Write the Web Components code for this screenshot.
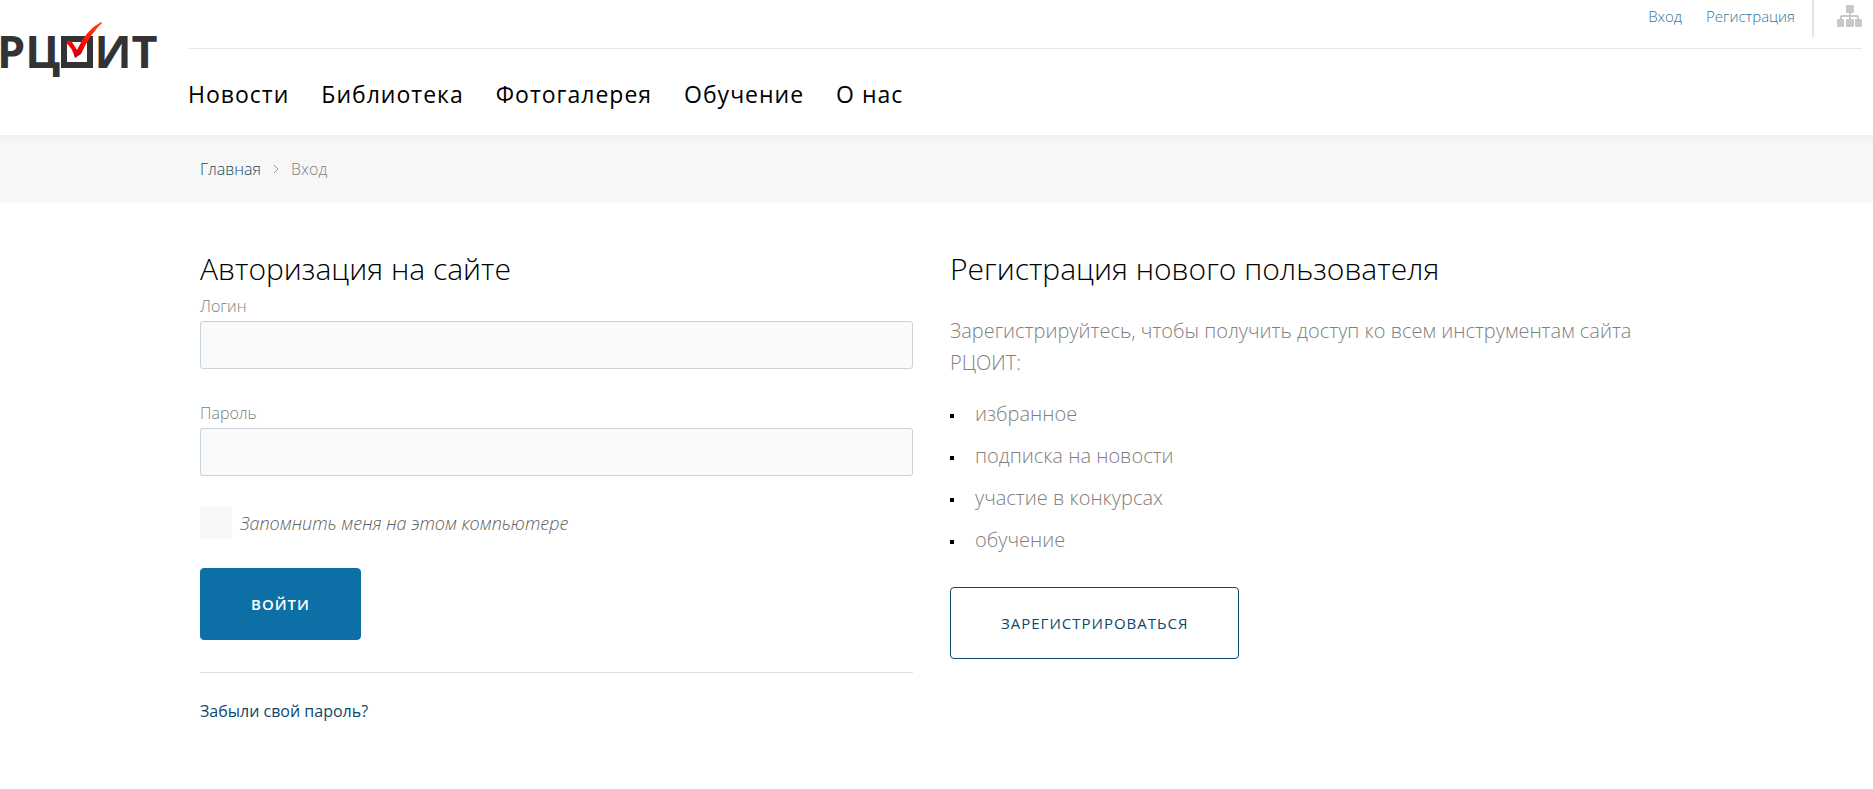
<!DOCTYPE html>
<html lang="ru">
<head>
<meta charset="utf-8">
<title>Вход — РЦОИТ</title>
<style>
body { margin: 0; background: #fff; color: #808080; font: 300 16px/26px "Open Sans", "Noto Sans", sans-serif; }
</style>
</head>
<body>
<site-page></site-page>
<script>
function define(name, html, setup) {
  const template = document.createElement('template');
  template.innerHTML = html;
  customElements.define(name, class extends HTMLElement {
    constructor() {
      super();
      this.attachShadow({ mode: 'open' }).append(template.content.cloneNode(true));
    }
    connectedCallback() { if (setup) setup(this, this.shadowRoot); }
  });
}

define('site-logo', `
<style>
:host { display: block; }
a { display: flex; align-items: flex-start; margin-left: -3px; color: #333; text-decoration: none; font-weight: 700; font-size: 45px; line-height: 60px; }
span { margin-top: 21px; }
svg { display: block; overflow: visible; margin: 22px 2px 0; }
</style>
<a href="#" aria-label="РЦОИТ"><span>РЦ</span>
<svg width="30" height="48" viewBox="0 0 30 48" aria-hidden="true">
  <defs><linearGradient id="g" x1="0" y1="1" x2="0" y2="0"><stop offset="0" stop-color="#b80010"/><stop offset=".35" stop-color="#f00"/><stop offset="1" stop-color="#ff4a12"/></linearGradient></defs>
  <path d="M2 17H28V43H2Z" fill="#fff" stroke="#333" stroke-width="6"/>
  <path d="M4 21Q7 17 10 20L15 28Q24 8 39 0L40 1Q28 12 19 32L13 36Q10 25 4 21Z" fill="url(#g)"/>
</svg><span>ИТ</span></a>`);

define('site-header', `
<style>
:host { display: flex; height: 135px; box-sizing: border-box; }
site-logo { width: 188px; flex: none; }
.main { flex: 1; margin-right: 11px; }
.top { height: 48px; display: flex; justify-content: flex-end; border-bottom: 1px solid #e8e8e8; }
.top a { color: #377499; text-decoration: none; font-size: 15px; line-height: 32px; margin-right: 24px; }
.top a.reg { margin-right: 17px; }
.top a.map { margin: 0; height: 37px; border-left: 2px solid #e5e5e5; padding-left: 23px; }
svg { display: block; margin-top: 5px; }
nav { display: flex; gap: 32px; padding-top: 27px; }
nav a { color: #000; text-decoration: none; font-weight: 400; font-size: 23px; line-height: 36px; letter-spacing: 1px; }
</style>
<site-logo></site-logo>
<div class="main">
<div class="top"><a href="#">Вход</a><a class="reg" href="#">Регистрация</a>
<a class="map" href="#" aria-label="Карта сайта"><svg width="25" height="22" viewBox="0 0 25 22" fill="#c8c8c8"><rect x="9" width="8" height="8" rx="1"/><rect y="14" width="7" height="8" rx="1"/><rect x="9" y="14" width="8" height="8" rx="1"/><rect x="18" y="14" width="7" height="8" rx="1"/><path d="M13 7V15M4 15V12Q4 11 5 11H20Q21 11 21 12V15" fill="none" stroke="#c8c8c8" stroke-width="2"/></svg></a></div>
<nav><a href="#">Новости</a><a href="#">Библиотека</a><a href="#">Фотогалерея</a><a href="#">Обучение</a><a href="#">О нас</a></nav>
</div>`);

define('bread-crumbs', `
<style>
:host { display: block; background: linear-gradient(#efefef, #f7f7f7 8px); padding: 21px 200px; }
nav { display: flex; align-items: center; }
a { color: #1c4a66; text-decoration: none; }
svg { margin: 0 12px; }
</style>
<nav><a href="#">Главная</a><svg width="6" height="10" viewBox="0 0 6 10" fill="none" stroke="#999"><path d="M1 1L5 5L1 9"/></svg><span>Вход</span></nav>`);

define('form-field', `
<style>
:host { display: block; }
label { display: block; line-height: 26px; }
input { display: block; box-sizing: border-box; width: 100%; height: 48px; margin-top: 2px; padding: 0 16px; border: 1px solid #c7d2db; border-radius: 3px; background: #f9fafc; font: inherit; color: #333; }
</style>
<label for="field"></label><input id="field">`, (el, root) => {
  root.querySelector('label').textContent = el.getAttribute('label');
  root.querySelector('input').type = el.getAttribute('type') || 'text';
});

define('push-button', `
<style>
:host { display: block; }
button { height: 72px; padding: 0 50px; border: 1px solid #0c6fa6; border-radius: 4px; background: #0c6fa6; color: #fff; font: 600 15px/22px "Open Sans", sans-serif; letter-spacing: 1px; text-transform: uppercase; }
:host([outline]) button { background: #fff; border-color: #0b486b; color: #0b486b; font-weight: 500; }
</style>
<button type="button"><slot></slot></button>`);

define('login-form', `
<style>
:host { display: block; }
h2 { margin: 0 0 6px; font-weight: 300; font-size: 30px; line-height: 36px; color: #000; }
form-field { margin-bottom: 31px; }
.remember { display: flex; align-items: center; gap: 8px; height: 32px; margin-bottom: 29px; font-style: italic; font-weight: 300; font-size: 18px; color: #606060; }
input { appearance: none; width: 32px; height: 32px; margin: 0; border-radius: 3px; background: #f8f8f8; }
hr { margin: 32px 0 25px; border: 0; border-top: 1px solid #e0e0e0; }
a { color: #0b486b; font-weight: 400; text-decoration: none; }
</style>
<h2>Авторизация на сайте</h2>
<form>
<form-field label="Логин"></form-field>
<form-field label="Пароль" type="password"></form-field>
<div class="remember"><input type="checkbox" id="keep"><label for="keep">Запомнить меня на этом компьютере</label></div>
<push-button>Войти</push-button>
</form>
<hr><a href="#">Забыли свой пароль?</a>`);

define('register-panel', `
<style>
:host { display: block; }
h2 { margin: 0 0 28px; font-weight: 300; font-size: 30px; line-height: 36px; color: #000; }
p { margin: 0 0 19px; font-size: 20px; line-height: 32px; }
ul { list-style: none; margin: 0 0 31px; padding: 0; display: grid; gap: 10px; font-size: 20px; line-height: 32px; }
li { display: flex; align-items: center; gap: 21px; }
li::before { content: ""; width: 4px; height: 4px; margin-top: 4px; background: #000; }
</style>
<h2>Регистрация нового пользователя</h2>
<p>Зарегистрируйтесь, чтобы получить доступ ко всем инструментам сайта РЦОИТ:</p>
<ul><li>избранное</li><li>подписка на новости</li><li>участие в конкурсах</li><li>обучение</li></ul>
<push-button outline>Зарегистрироваться</push-button>`);

define('site-page', `
<style>
:host { display: block; }
main { display: grid; grid-template-columns: 1fr 1fr; gap: 37px; padding: 48px 210px 64px 200px; }
</style>
<site-header></site-header>
<bread-crumbs></bread-crumbs>
<main><login-form></login-form><register-panel></register-panel></main>`);
</script>
</body>
</html>
